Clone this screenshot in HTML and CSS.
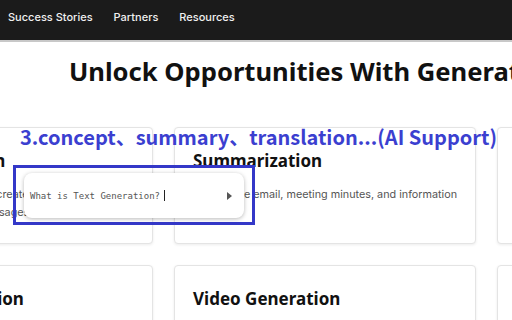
FILE: index.html
```html
<!DOCTYPE html>
<html lang="en">
<head>
  <meta charset="UTF-8" />
  <title>Generative AI</title>
  <link rel="stylesheet" href="styles.css">
</head>
<body>
  <nav class="topnav">
    <a href="#">Success Stories</a>
    <a href="#">Partners</a>
    <a href="#">Resources</a>
  </nav>
  <main class="page">
    <h1>Unlock Opportunities With Generative AI</h1>
    <div class="card-grid">
      <div class="card">
        <h2>Text Generation</h2>
        <p>Use language models to create articles, stories, blog posts and new email messages.</p>
      </div>
      <div class="card">
        <h2>Summarization</h2>
        <p>Summarize email, meeting minutes, and information quickly.</p>
      </div>
      <div class="card">
        <h2>Translation</h2>
        <p>Translate content across languages.</p>
      </div>
      <div class="card">
        <h2>Image Generation</h2>
      </div>
      <div class="card">
        <h2>Video Generation</h2>
      </div>
      <div class="card">
        <h2>Code Generation</h2>
      </div>
    </div>
  </main>

  <div class="annot-label">3.concept、summary、translation...(AI Support)</div>
  <div class="annot-box">
    <div class="prompt">
      <span class="prompt-text">What is Text Generation?</span><span class="caret"></span>
      <span class="send"></span>
    </div>
  </div>
</body>
</html>
```

FILE: styles.css
```css
body {
  margin: 0;
  background: #fff;
  font-family: 'Inter', 'Noto Sans', Arial, sans-serif;
  color: #181818;
  overflow: hidden;
  width: 512px;
  height: 320px;
}
.topnav {
  height: 42px;
  background: #1b1b1b;
  border-bottom: 2px solid #c8c8c8;
  display: flex;
  align-items: center;
  gap: 21px;
  padding: 0 0 0 8px;
  box-sizing: border-box;
}
.topnav a {
  color: #f0f0f0;
  text-decoration: none;
  font-size: 11px;
  font-weight: 500;
  padding-bottom: 6px;
}
.page {
  padding-top: 14px;
}
h1 {
  margin: 0 0 39px 69px;
  white-space: nowrap;
  font-family: 'Noto Sans', Arial, sans-serif;
  font-size: 25.6px;
  line-height: 32px;
  font-weight: 700;
  color: #111;
}
.card-grid {
  display: grid;
  grid-template-columns: 302px 302px 302px;
  grid-auto-rows: 117px;
  gap: 21px 21px;
  margin-left: -149px;
}
.card {
  border: 1px solid #e4e4e4;
  border-radius: 4px;
  box-shadow: 0 1px 3px rgba(0,0,0,0.08);
  padding: 22px 14px 0 18px;
  background: #fff;
}
.card h2 {
  margin: 0;
  font-family: 'Noto Sans', Arial, sans-serif;
  font-size: 17px;
  line-height: 22px;
  font-weight: 700;
  color: #111;
}
.card p {
  margin: 14px 0 0;
  font-size: 10.8px;
  line-height: 18px;
  color: #555;
}
.annot-label {
  position: absolute;
  left: 20px;
  top: 124px;
  font-family: 'Noto Sans CJK SC', 'Noto Sans', sans-serif;
  font-size: 20px;
  line-height: 26px;
  font-weight: 700;
  color: #3b3fd0;
  white-space: nowrap;
}
.annot-box {
  position: absolute;
  left: 13px;
  top: 165px;
  width: 242px;
  height: 60px;
  box-sizing: border-box;
  border: 3px solid #3438c8;
  padding: 5px 8px 4px 8px;
}
.prompt {
  height: 100%;
  background: #fff;
  border-radius: 8px;
  box-shadow: 0 1px 4px rgba(0,0,0,0.28);
  display: flex;
  align-items: center;
  padding: 0 12px 0 6px;
}
.prompt-text {
  font-family: 'DejaVu Sans Mono', 'Liberation Mono', monospace;
  font-size: 9px;
  color: #555;
}
.caret {
  width: 1px;
  height: 11px;
  background: #222;
  margin-left: 4px;
}
.send {
  margin-left: auto;
  width: 0;
  height: 0;
  border-top: 4px solid transparent;
  border-bottom: 4px solid transparent;
  border-left: 5px solid #555;
}
```
